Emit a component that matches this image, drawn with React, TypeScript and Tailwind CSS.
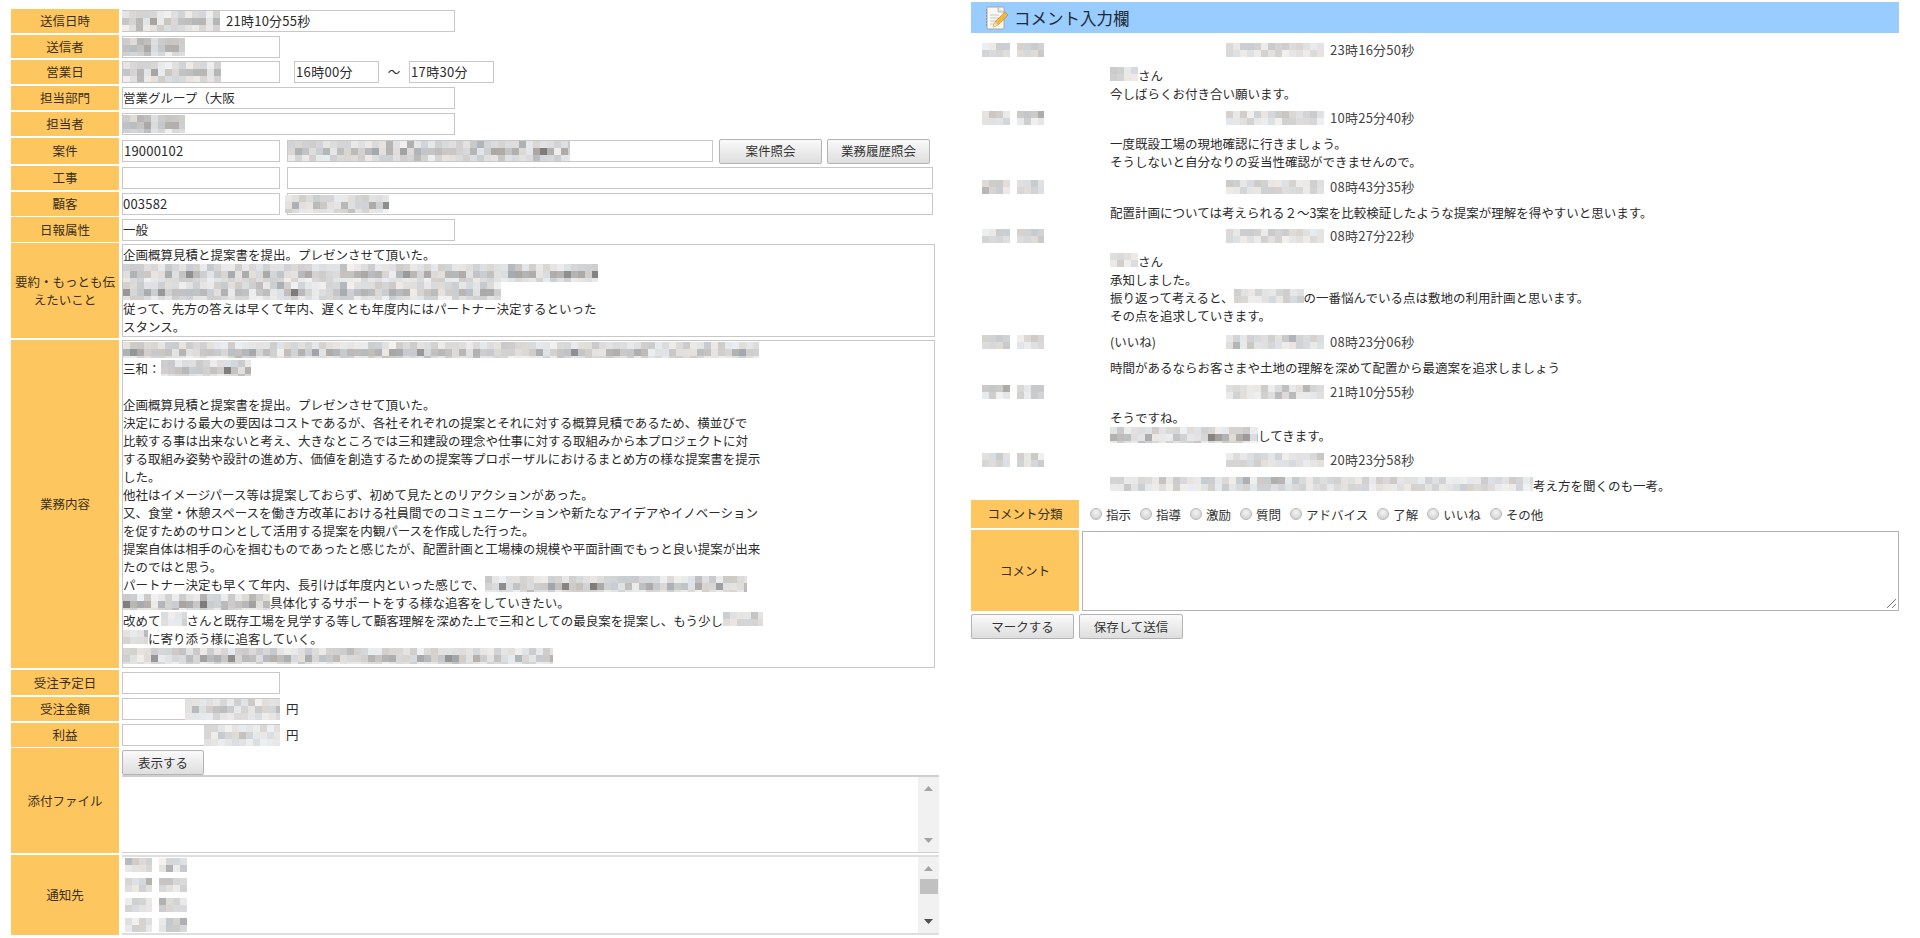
import React from "react";

function rnd(seed: number) {
  let s = seed * 9301 + 49297;
  return () => {
    s = (s * 9301 + 49297) % 233280;
    return s / 233280;
  };
}

function Blur({ w, h = 14, seed = 1, dark = 1, cell = 7 }: { w: number; h?: number; seed?: number; dark?: number; cell?: number }) {
  const r = rnd(seed);
  const cols = Math.ceil(w / cell);
  const rows = Math.ceil(h / cell);
  const rects: React.ReactNode[] = [];
  for (let y = 0; y < rows; y++) {
    const rowAmt = rows === 1 ? 1 : y === 0 ? 0.55 : y === rows - 1 ? 0.5 : 1;
    for (let x = 0; x < cols; x++) {
      const gap = r() < 0.1 ? 0.3 : 1;
      const spike = r() < 0.12 ? 1.6 : 1;
      const v = Math.min(120, (16 + r() * 62) * rowAmt * gap * spike * dark);
      const g = Math.round(244 - v);
      const tint = Math.round((r() - 0.5) * 8);
      rects.push(
        <rect key={`${x}-${y}`} x={x * cell} y={y * cell} width={cell} height={cell} fill={`rgb(${g + tint},${g},${g - tint})`} />
      );
    }
  }
  return (
    <svg width={w} height={h} viewBox={`0 0 ${w} ${h}`} shapeRendering="crispEdges" className="inline-block align-top">
      {rects}
    </svg>
  );
}

function Label({ children, h }: { children: React.ReactNode; h: string }) {
  return (
    <div className={`${h} w-[108px] shrink-0 bg-[#fec65e] flex items-center justify-center text-center text-[12.5px] leading-[18px] text-[#3a3020]`}>
      <span>{children}</span>
    </div>
  );
}

function Box({ w, children, className = "" }: { w: string; children?: React.ReactNode; className?: string }) {
  return (
    <div className={`${w} h-[22px] shrink-0 border border-[#c8c8c8] bg-white flex items-center whitespace-nowrap overflow-visible ${className}`}>
      {children}
    </div>
  );
}

function Btn({ w, children }: { w: string; children: React.ReactNode }) {
  return (
    <div className={`${w} h-[25px] shrink-0 border border-[#b4b4b4] rounded-[2px] bg-gradient-to-b from-[#fafafa] to-[#dedede] flex items-center justify-center text-[12.5px] text-[#333]`}>
      {children}
    </div>
  );
}

function Row({ h, label, mb = "mb-[2px]", children }: { h: string; label: React.ReactNode; mb?: string; children?: React.ReactNode }) {
  return (
    <div className={`flex gap-[3px] ${mb}`}>
      <Label h={h}>{label}</Label>
      <div className={`${h} flex-1 flex items-center min-w-0`}>{children}</div>
    </div>
  );
}

function Scroll({ thumb, dark }: { thumb?: boolean; dark?: boolean }) {
  return (
    <div className="w-[21px] shrink-0 h-full bg-[#f1f1f1] flex flex-col items-center justify-between pt-[9px] pb-[9px] relative">
      <svg width="9" height="5" viewBox="0 0 9 5"><path d="M4.5 0L9 5H0z" fill="#a3a3a3" /></svg>
      {thumb && <div className="absolute top-[22px] left-[2px] w-[18px] h-[15px] bg-[#c1c1c1]" />}
      <svg width="9" height="5" viewBox="0 0 9 5"><path d="M0 0H9L4.5 5z" fill={dark ? "#505050" : "#a3a3a3"} /></svg>
    </div>
  );
}

function Radio({ label }: { label: string }) {
  return (
    <div className="flex items-center mr-[9px]">
      <span className="w-[12px] h-[12px] rounded-full border border-[#b8b8b8] bg-[radial-gradient(circle_at_50%_35%,#f4f4f4,#c9c9c9)] mr-[4px] -mt-[2px]" />
      <span>{label}</span>
    </div>
  );
}

function Comment({ seed, time, tag, pb = "pb-[3px]", children }: { seed: number; time: string; tag?: string; pb?: string; children: React.ReactNode }) {
  return (
    <div className={pb}>
      <div className="h-[24px] flex items-center">
        <div className="w-[128px] pl-[11px] shrink-0 flex gap-[7px]">
          <Blur w={28} h={14} seed={seed} dark={1.1} />
          <Blur w={27} h={14} seed={seed + 3} dark={1.1} />
        </div>
        <div className="w-[127px] shrink-0 pl-[11px]">{tag}</div>
        <div className="w-[104px] shrink-0 flex justify-end pr-[6px]"><Blur w={98} h={14} seed={seed + 7} /></div>
        <span className="text-[13px] tracking-[0.25px] text-[#444]">{time}</span>
      </div>
      <div className="pl-[139px] pt-[5px]">{children}</div>
    </div>
  );
}

const L = ({ children }: { children?: React.ReactNode }) => (
  <div className="h-[18px] whitespace-nowrap">{children}</div>
);

export default function App() {
  return (
    <div className="w-[1920px] h-[938px] overflow-hidden bg-white flex gap-[32px] pl-[11px] text-[12.5px] leading-[18px] text-[#2b2b2b] font-['Noto_Sans_CJK_JP','Noto_Sans',sans-serif]">
      <div className="w-[928px] shrink-0 pt-[9px] flex flex-col">
        <Row h="h-[24px]" label="送信日時">
          <Box w="w-[333px]"><span className="-ml-px"><Blur w={98} h={20} seed={2} /></span><span className="ml-[6px] text-[13px] tracking-[0.25px]">21時10分55秒</span></Box>
        </Row>
        <Row h="h-[23px]" label="送信者">
          <Box w="w-[158px]"><Blur w={62} h={18} seed={5} dark={1.1} /></Box>
        </Row>
        <Row h="h-[24px]" label="営業日">
          <Box w="w-[158px]"><Blur w={98} h={20} seed={2} /></Box>
          <Box w="w-[85px]" className="ml-[14px] pl-px text-[13px] tracking-[0.35px]">16時00分</Box>
          <span className="w-[30px] text-center">～</span>
          <Box w="w-[85px]" className="pl-px text-[13px] tracking-[0.35px]">17時30分</Box>
        </Row>
        <Row h="h-[24px]" label="担当部門">
          <Box w="w-[333px]">営業グループ（大阪</Box>
        </Row>
        <Row h="h-[24px]" label="担当者">
          <Box w="w-[333px]"><Blur w={62} h={18} seed={5} dark={1.1} /></Box>
        </Row>
        <Row h="h-[26px]" label="案件">
          <Box w="w-[158px]" className="pl-px text-[13px] tracking-[0.2px]">19000102</Box>
          <Box w="w-[426px]" className="ml-[7px]"><Blur w={282} h={20} seed={9} /></Box>
          <div className="ml-[6px]"><Btn w="w-[103px]">案件照会</Btn></div>
          <div className="ml-[5px]"><Btn w="w-[103px]">業務履歴照会</Btn></div>
        </Row>
        <Row h="h-[24px]" label="工事">
          <Box w="w-[158px]" />
          <Box w="w-[646px]" className="ml-[7px]" />
        </Row>
        <Row h="h-[24px]" label="顧客" mb="mb-[1px]">
          <Box w="w-[158px]" className="text-[13px] tracking-[0.2px]">003582</Box>
          <Box w="w-[646px]" className="ml-[7px]"><span className="-ml-[3px]"><Blur w={104} h={18} seed={11} /></span></Box>
        </Row>
        <Row h="h-[25px]" label="日報属性" mb="mb-[1px]">
          <Box w="w-[333px]">一般</Box>
        </Row>
        <Row h="h-[95px]" label={<>要約・もっとも伝<br />えたいこと</>}>
          <div className="w-[813px] h-[93px] border border-[#c8c8c8] pt-px">
            <L>企画概算見積と提案書を提出。プレゼンさせて頂いた。</L>
            <L><Blur w={475} h={18} seed={14} /></L>
            <L><Blur w={378} h={18} seed={17} /></L>
            <L>従って、先方の答えは早くて年内、遅くとも年度内にはパートナー決定するといった</L>
            <L>スタンス。</L>
          </div>
        </Row>
        <Row h="h-[328px]" label="業務内容">
          <div className="w-[813px] h-[328px] border border-[#c8c8c8] pt-[1px] leading-[18px]">
            <L><Blur w={636} h={16} seed={21} /></L>
            <L>三和：<Blur w={90} h={16} seed={24} /></L>
            <L />
            <L>企画概算見積と提案書を提出。プレゼンさせて頂いた。</L>
            <L>決定における最大の要因はコストであるが、各社それぞれの提案とそれに対する概算見積であるため、横並びで</L>
            <L>比較する事は出来ないと考え、大きなところでは三和建設の理念や仕事に対する取組みから本プロジェクトに対</L>
            <L>する取組み姿勢や設計の進め方、価値を創造するための提案等プロポーザルにおけるまとめ方の様な提案書を提示</L>
            <L>した。</L>
            <L>他社はイメージパース等は提案しておらず、初めて見たとのリアクションがあった。</L>
            <L>又、食堂・休憩スペースを働き方改革における社員間でのコミュニケーションや新たなアイデアやイノベーション</L>
            <L>を促すためのサロンとして活用する提案を内観パースを作成した行った。</L>
            <L>提案自体は相手の心を掴むものであったと感じたが、配置計画と工場棟の規模や平面計画でもっと良い提案が出来</L>
            <L>たのではと思う。</L>
            <L>パートナー決定も早くて年内、長引けば年度内といった感じで、<Blur w={262} h={16} seed={27} /></L>
            <L><Blur w={147} h={16} seed={29} />具体化するサポートをする様な追客をしていきたい。</L>
            <L>改めて<Blur w={26} h={14} seed={31} />さんと既存工場を見学する等して顧客理解を深めた上で三和としての最良案を提案し、もう少し<Blur w={40} h={14} seed={33} /></L>
            <L><Blur w={25} h={14} seed={35} />に寄り添う様に追客していく。</L>
            <L><Blur w={430} h={16} seed={37} /></L>
          </div>
        </Row>
        <Row h="h-[25px]" label="受注予定日">
          <Box w="w-[158px]" />
        </Row>
        <Row h="h-[24px]" label="受注金額">
          <Box w="w-[158px]" className="justify-end"><span className="-mr-px"><Blur w={95} h={21} seed={41} dark={0.7} /></span></Box>
          <span className="ml-[6px]">円</span>
        </Row>
        <Row h="h-[24px]" label="利益" mb="mb-[1px]">
          <Box w="w-[158px]" className="justify-end"><span className="-mr-px"><Blur w={76} h={21} seed={43} dark={0.7} /></span></Box>
          <span className="ml-[6px]">円</span>
        </Row>
        <div className="flex gap-[3px] mb-[2px]">
          <Label h="h-[105px]">添付ファイル</Label>
          <div className="w-[817px] flex flex-col">
            <div className="h-[27px] pt-[2px]"><Btn w="w-[82px]">表示する</Btn></div>
            <div className="h-[78px] border-t-2 border-b border-[#cfcfcf] flex justify-end">
              <Scroll />
            </div>
          </div>
        </div>
        <div className="flex gap-[3px]">
          <Label h="h-[80px]">通知先</Label>
          <div className="w-[817px] h-[80px] border-y-2 border-[#dedede] flex justify-between">
            <div className="pl-[3px] pt-[1px] flex flex-col gap-[6px]">
              {[51, 55, 59, 63].map((s) => (
                <div key={s} className="flex gap-[7px]">
                  <Blur w={27} h={14} seed={s} dark={1.1} />
                  <Blur w={28} h={14} seed={s + 2} dark={1.1} />
                </div>
              ))}
            </div>
            <Scroll thumb dark />
          </div>
        </div>
      </div>

      <div className="w-[928px] shrink-0 pt-[2px] flex flex-col">
        <div className="h-[31px] bg-[#99ccff] flex items-center pl-[14px] text-[16.5px] text-[#1f2a36] mb-[5px]">
          <svg width="24" height="26" viewBox="0 0 24 26" className="mr-[5px]">
            <rect x="2" y="2" width="17" height="22" rx="1.5" fill="#f7f7f4" stroke="#a8a8a0" />
            <path d="M13 2v5h6" fill="#e4e4de" stroke="#a8a8a0" strokeWidth="0.7" />
            <path d="M2 5h-1M2 8h-1M2 11h-1M2 14h-1M2 17h-1M2 20h-1" stroke="#777" strokeWidth="1.2" />
            <path d="M5 10h9M5 13h9M5 16h6M5 19h5" stroke="#c8c8c0" />
            <path d="M8 22l2-5L20 7l3 3-10 10z" fill="#f6b73c" stroke="#b97a16" strokeWidth="0.6" />
            <path d="M8 22l2-5 3 3z" fill="#f3dfb6" />
          </svg>
          コメント入力欄
        </div>

        <Comment seed={71} time="23時16分50秒">
          <L><Blur w={28} h={14} seed={80} />さん</L>
          <L>今しばらくお付き合い願います。</L>
        </Comment>
        <Comment seed={72} time="10時25分40秒" pb="pb-[4px]">
          <L>一度既設工場の現地確認に行きましょう。</L>
          <L>そうしないと自分なりの妥当性確認ができませんので。</L>
        </Comment>
        <Comment seed={73} time="08時43分35秒" pb="pb-[2px]">
          <L>配置計画については考えられる２～3案を比較検証したような提案が理解を得やすいと思います。</L>
        </Comment>
        <Comment seed={71} time="08時27分22秒" pb="pb-[5px]">
          <L><Blur w={28} h={14} seed={82} />さん</L>
          <L>承知しました。</L>
          <L>振り返って考えると、<Blur w={70} h={14} seed={84} />の一番悩んでいる点は敷地の利用計画と思います。</L>
          <L>その点を追求していきます。</L>
        </Comment>
        <Comment seed={74} time="08時23分06秒" tag="(いいね)">
          <L>時間があるならお客さまや土地の理解を深めて配置から最適案を追求しましょう</L>
        </Comment>
        <Comment seed={75} time="21時10分55秒">
          <L>そうですね。</L>
          <L><Blur w={148} h={16} seed={86} />してきます。</L>
        </Comment>
        <Comment seed={76} time="20時23分58秒" pb="pb-[5px]">
          <L><Blur w={423} h={14} seed={88} />考え方を聞くのも一考。</L>
        </Comment>

        <div className="flex gap-[3px] mb-[2px]">
          <Label h="h-[28px]">コメント分類</Label>
          <div className="flex items-center pl-[8px] pt-[2px] text-[#333]">
            <Radio label="指示" />
            <Radio label="指導" />
            <Radio label="激励" />
            <Radio label="質問" />
            <Radio label="アドバイス" />
            <Radio label="了解" />
            <Radio label="いいね" />
            <Radio label="その他" />
          </div>
        </div>
        <div className="flex gap-[3px] mb-[3px]">
          <Label h="h-[81px]">コメント</Label>
          <div className="flex-1 h-[80px] mt-px border border-[#b4b4b4] relative">
            <svg width="11" height="11" viewBox="0 0 11 11" className="absolute right-px bottom-px">
              <path d="M1 10L10 1M6 10L10 6" stroke="#777" strokeWidth="1" />
            </svg>
          </div>
        </div>
        <div className="flex gap-[5px]">
          <Btn w="w-[103px]">マークする</Btn>
          <Btn w="w-[104px]">保存して送信</Btn>
        </div>
      </div>
    </div>
  );
}
